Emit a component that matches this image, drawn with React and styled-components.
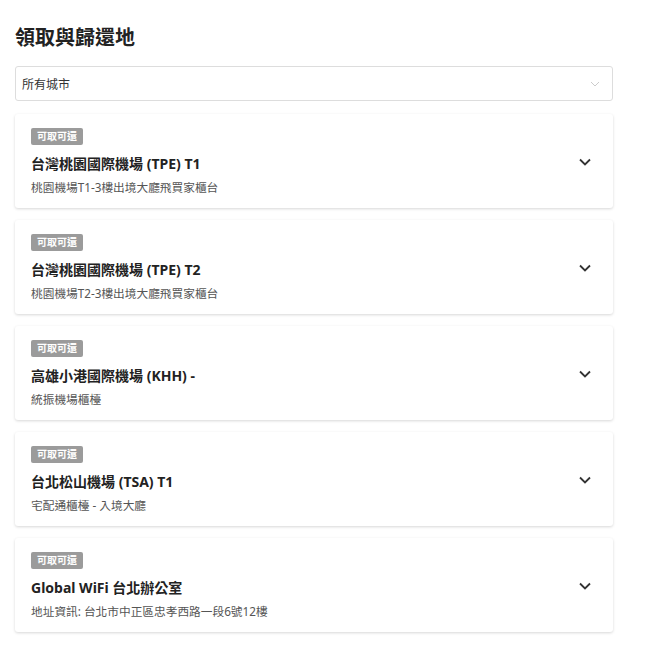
import React from "react";
import styled, { createGlobalStyle } from "styled-components";

const GlobalStyle = createGlobalStyle`
  body {
    margin: 0;
    background: #fff;
    font-family: "Noto Sans", "Noto Sans CJK TC", sans-serif;
    color: #222;
  }
`;

const Root = styled.div`
  width: 598px;
  padding: 22px 0 16px 15px;
`;

const Heading = styled.h2`
  font-size: 20px;
  font-weight: 700;
  margin: 0 0 12px;
  line-height: 32px;
  color: #222;
`;

const Select = styled.div`
  height: 35px;
  box-sizing: border-box;
  border: 1px solid #ddd;
  border-radius: 3px;
  display: flex;
  align-items: center;
  justify-content: space-between;
  padding: 0 12px 0 6px;
  font-size: 12px;
  color: #333;
  margin-bottom: 13px;
`;

const List = styled.div`
  display: flex;
  flex-direction: column;
  gap: 12px;
`;

const Card = styled.div`
  height: 94px;
  box-sizing: border-box;
  border-radius: 3px;
  box-shadow: 0 1px 3px rgba(0, 0, 0, 0.16);
  padding: 14px 22px 0 16px;
  display: flex;
  justify-content: space-between;
  align-items: flex-start;
`;

const Info = styled.div`
  display: flex;
  flex-direction: column;
`;

const Badge = styled.span`
  align-self: flex-start;
  background: #9b9b9b;
  color: #fff;
  font-size: 10px;
  font-weight: 700;
  line-height: 17px;
  padding: 0 6px;
  border-radius: 2px;
`;

const Title = styled.div`
  font-size: 14px;
  font-weight: 700;
  color: #222;
  margin-top: 9px;
  line-height: 20px;
`;

const Sub = styled.div`
  font-size: 11.7px;
  color: #555;
  margin-top: 5px;
  line-height: 16px;
`;

const Chevron = styled.svg`
  margin-top: 30px;
`;

const items = [
  { title: "台灣桃園國際機場 (TPE) T1", sub: "桃園機場T1-3樓出境大廳飛買家櫃台" },
  { title: "台灣桃園國際機場 (TPE) T2", sub: "桃園機場T2-3樓出境大廳飛買家櫃台" },
  { title: "高雄小港國際機場 (KHH) -", sub: "統振機場櫃檯" },
  { title: "台北松山機場 (TSA) T1", sub: "宅配通櫃檯 - 入境大廳" },
  { title: "Global WiFi 台北辦公室", sub: "地址資訊: 台北市中正區忠孝西路一段6號12樓" },
];

const App = () => (
  <Root>
    <GlobalStyle />
    <Heading>領取與歸還地</Heading>
    <Select>
      <span>所有城市</span>
      <svg width="10" height="6" viewBox="0 0 10 6">
        <path d="M1 1l4 4 4-4" fill="none" stroke="#ccc" strokeWidth="1" />
      </svg>
    </Select>
    <List>
      {items.map((it) => (
        <Card key={it.title}>
          <Info>
            <Badge>可取可還</Badge>
            <Title>{it.title}</Title>
            <Sub>{it.sub}</Sub>
          </Info>
          <Chevron width="12" height="8" viewBox="0 0 12 8">
            <path d="M1 1.5l5 5 5-5" fill="none" stroke="#333" strokeWidth="1.8" />
          </Chevron>
        </Card>
      ))}
    </List>
  </Root>
);

export default App;
